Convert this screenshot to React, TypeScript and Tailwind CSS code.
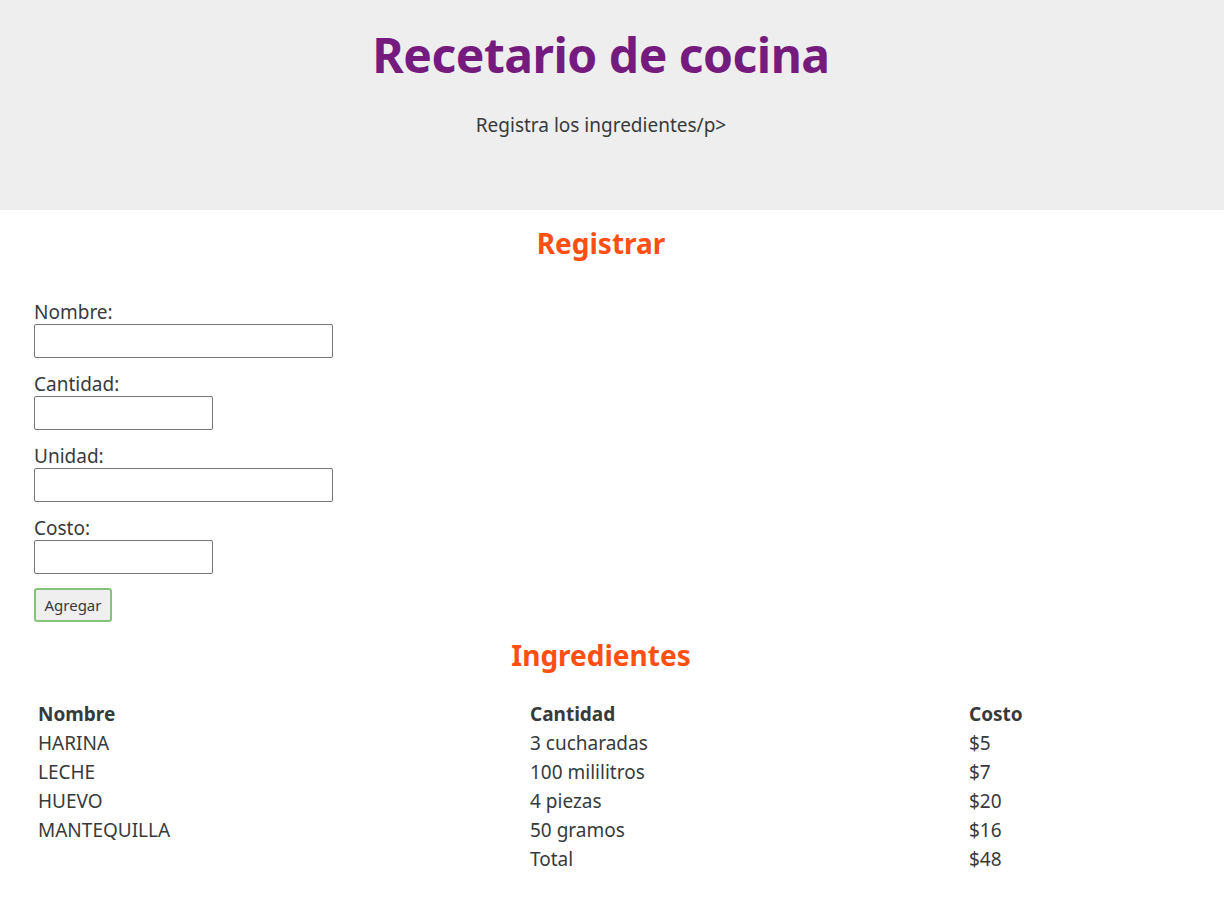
import React from 'react';

const ingredientes = [
  { nombre: 'HARINA', cantidad: '3 cucharadas', costo: '$5' },
  { nombre: 'LECHE', cantidad: '100 mililitros', costo: '$7' },
  { nombre: 'HUEVO', cantidad: '4 piezas', costo: '$20' },
  { nombre: 'MANTEQUILLA', cantidad: '50 gramos', costo: '$16' },
];

const campos = [
  { label: 'Nombre:', w: 'w-[299px]' },
  { label: 'Cantidad:', w: 'w-[179px]' },
  { label: 'Unidad:', w: 'w-[299px]' },
  { label: 'Costo:', w: 'w-[179px]' },
];

const App: React.FC = () => {
  return (
    <div className="min-h-[900px] bg-white text-[#373a3c] font-['Noto_Sans','Open_Sans',sans-serif] text-[19px]">
      {/* Header */}
      <header className="bg-[#eeeeee] h-[210px] pt-[23px] pr-[22px] text-center">
        <h1 className="text-[48px] leading-[64px] font-bold text-[#741b7d] tracking-[-0.5px]">Recetario de cocina</h1>
        <p className="mt-[24px] leading-[29px]">Registra los ingredientes/p&gt;</p>
      </header>

      {/* Registrar */}
      <h2 className="mt-[15px] pr-[22px] text-center text-[28px] leading-[36px] font-bold text-[#ff4f12]">Registrar</h2>
      <form className="px-[34px] mt-[39px] flex flex-col" onSubmit={(e) => e.preventDefault()}>
        {campos.map((c) => (
          <div key={c.label} className="flex flex-col mb-[14px] last:mb-[12px]">
            <label className="leading-[24px]">{c.label}</label>
            <input className={`${c.w} h-[34px] border border-[#767676] rounded-[2px] bg-white`} />
          </div>
        ))}
        <div>
          <button className="h-[34px] w-[78px] border-2 border-[#85c37b] rounded-[3px] bg-[#efefef] text-[15px]">Agregar</button>
        </div>
      </form>

      {/* Ingredientes */}
      <h2 className="mt-[15px] pr-[22px] text-center text-[28px] leading-[36px] font-bold text-[#ff4f12]">Ingredientes</h2>
      <div className="px-[34px] mt-[27px]">
        <table className="w-[1156px] text-left border-collapse">
          <thead>
            <tr className="h-[29px]">
              <th className="w-[492px] pl-1 font-bold">Nombre</th>
              <th className="w-[439px] pl-1 font-bold">Cantidad</th>
              <th className="pl-1 font-bold">Costo</th>
            </tr>
          </thead>
          <tbody>
            {ingredientes.map((i) => (
              <tr key={i.nombre} className="h-[29px]">
                <td className="pl-1">{i.nombre}</td>
                <td className="pl-1">{i.cantidad}</td>
                <td className="pl-1">{i.costo}</td>
              </tr>
            ))}
            <tr className="h-[29px]">
              <td className="pl-1"></td>
              <td className="pl-1">Total</td>
              <td className="pl-1">$48</td>
            </tr>
          </tbody>
        </table>
      </div>
    </div>
  );
};

export default App;
